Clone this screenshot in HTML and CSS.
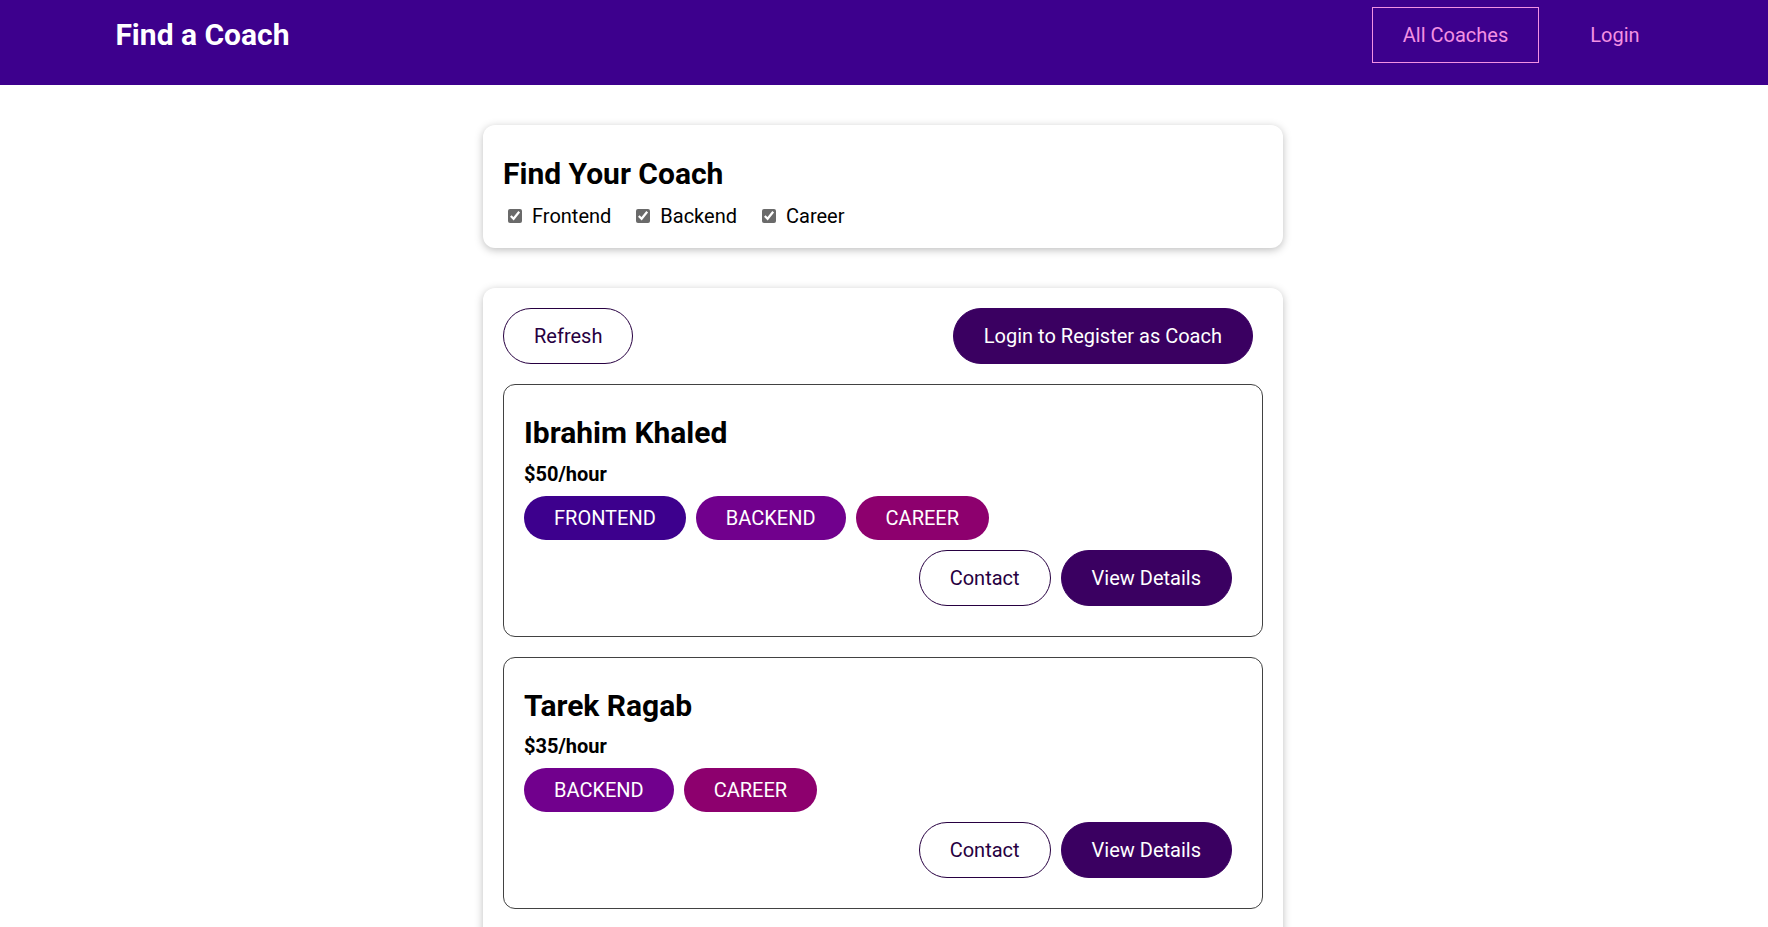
FILE: index.html
```html
<!DOCTYPE html>
<html lang="en">
<head>
<meta charset="utf-8">
<title>Find a Coach</title>
<link rel="stylesheet" href="styles.css">
</head>
<body>
<header class="site-header">
  <nav class="nav">
    <h1 class="brand"><a href="#">Find a Coach</a></h1>
    <ul class="nav-list">
      <li><a class="nav-link active" href="#">All Coaches</a></li>
      <li><a class="nav-link" href="#">Login</a></li>
    </ul>
  </nav>
</header>
<main class="content">
  <section class="card filter-card">
    <h2>Find Your Coach</h2>
    <div class="filters">
      <span class="filter-option"><input type="checkbox" id="frontend" checked><label for="frontend">Frontend</label></span>
      <span class="filter-option"><input type="checkbox" id="backend" checked><label for="backend">Backend</label></span>
      <span class="filter-option"><input type="checkbox" id="career" checked><label for="career">Career</label></span>
    </div>
  </section>
  <section class="card list-card">
    <div class="controls">
      <button class="btn btn-outline" type="button">Refresh</button>
      <a class="btn" href="#">Login to Register as Coach</a>
    </div>
    <ul class="coach-list">
      <li class="coach">
        <h3>Ibrahim Khaled</h3>
        <h4>$50/hour</h4>
        <div class="badges">
          <span class="badge frontend">FRONTEND</span>
          <span class="badge backend">BACKEND</span>
          <span class="badge career">CAREER</span>
        </div>
        <div class="actions">
          <a class="btn btn-outline" href="#">Contact</a>
          <a class="btn" href="#">View Details</a>
        </div>
      </li>
      <li class="coach">
        <h3>Tarek Ragab</h3>
        <h4>$35/hour</h4>
        <div class="badges">
          <span class="badge backend">BACKEND</span>
          <span class="badge career">CAREER</span>
        </div>
        <div class="actions">
          <a class="btn btn-outline" href="#">Contact</a>
          <a class="btn" href="#">View Details</a>
        </div>
      </li>
    </ul>
  </section>
</main>
</body>
</html>
```
FILE: styles.css
```css
* {
  box-sizing: border-box;
}

html {
  font-family: Roboto, "Liberation Sans", sans-serif;
  font-size: 20px;
}

body {
  margin: 0;
  color: #000;
}

.site-header {
  height: 85px;
  background-color: #3d008d;
  padding-top: 7px;
}

.nav {
  width: 90%;
  margin: 0 auto;
  height: 55px;
  display: flex;
  justify-content: space-between;
  align-items: center;
}

.brand {
  margin: 0;
  font-size: 30px;
  font-weight: 700;
}

.brand a {
  color: #fff;
  text-decoration: none;
  padding: 0 26px;
  border: 1px solid transparent;
}

.nav-list {
  list-style: none;
  margin: 0 -1px 0 0;
  padding: 0;
  display: flex;
  align-items: center;
}

.nav-list li {
  margin: 0 10px;
}

.nav-link {
  display: inline-block;
  text-decoration: none;
  color: #f391e3;
  font-size: 20px;
  padding: 15px 30px;
  border: 1px solid transparent;
}

.nav-link.active {
  border-color: #f391e3;
}

.content {
  padding-right: 2px;
}

.card {
  max-width: 800px;
  margin: 40px auto;
  padding: 20px;
  border-radius: 12px;
  background: #fff;
  box-shadow: 0 2px 8px rgba(0, 0, 0, 0.26);
}

.filter-card h2 {
  margin: 11px 0 13px;
  font-size: 30px;
  font-weight: 700;
}

.filters {
  display: flex;
  align-items: center;
}

.filter-option {
  display: flex;
  align-items: center;
  margin-right: 20px;
  font-size: 20px;
}

.filter-option input {
  width: 14px;
  height: 14px;
  margin: 0 10px 0 5px;
  accent-color: #6a6a6a;
}

.controls {
  display: flex;
  justify-content: space-between;
  align-items: center;
}

.btn {
  display: inline-block;
  text-decoration: none;
  padding: 15px 30px;
  font: inherit;
  line-height: normal;
  background-color: #3a0061;
  border: 1px solid #3a0061;
  color: #fff;
  border-radius: 30px;
  margin-right: 10px;
  cursor: pointer;
}

.btn-outline {
  background-color: transparent;
  border-color: #270041;
  color: #270041;
}

.coach-list {
  list-style: none;
  margin: 0;
  padding: 0;
}

.coach {
  margin: 20px 0;
  border: 1px solid #424242;
  border-radius: 12px;
  padding: 20px;
}

.coach h3 {
  font-size: 30px;
  font-weight: 700;
  line-height: 36.5px;
  margin: 10px 0;
}

.coach h4 {
  font-size: 20px;
  font-weight: 700;
  margin: 10px 0;
}

.badges,
.actions {
  margin: 10px 0;
  display: flex;
}

.actions {
  justify-content: flex-end;
}

.badge {
  display: inline-block;
  padding: 10px 30px;
  border-radius: 30px;
  margin-right: 10px;
  color: #fff;
  font-size: 20px;
  line-height: normal;
}

.badge.frontend {
  background-color: #3d008d;
}

.badge.backend {
  background-color: #71008d;
}

.badge.career {
  background-color: #8d006e;
}
```
